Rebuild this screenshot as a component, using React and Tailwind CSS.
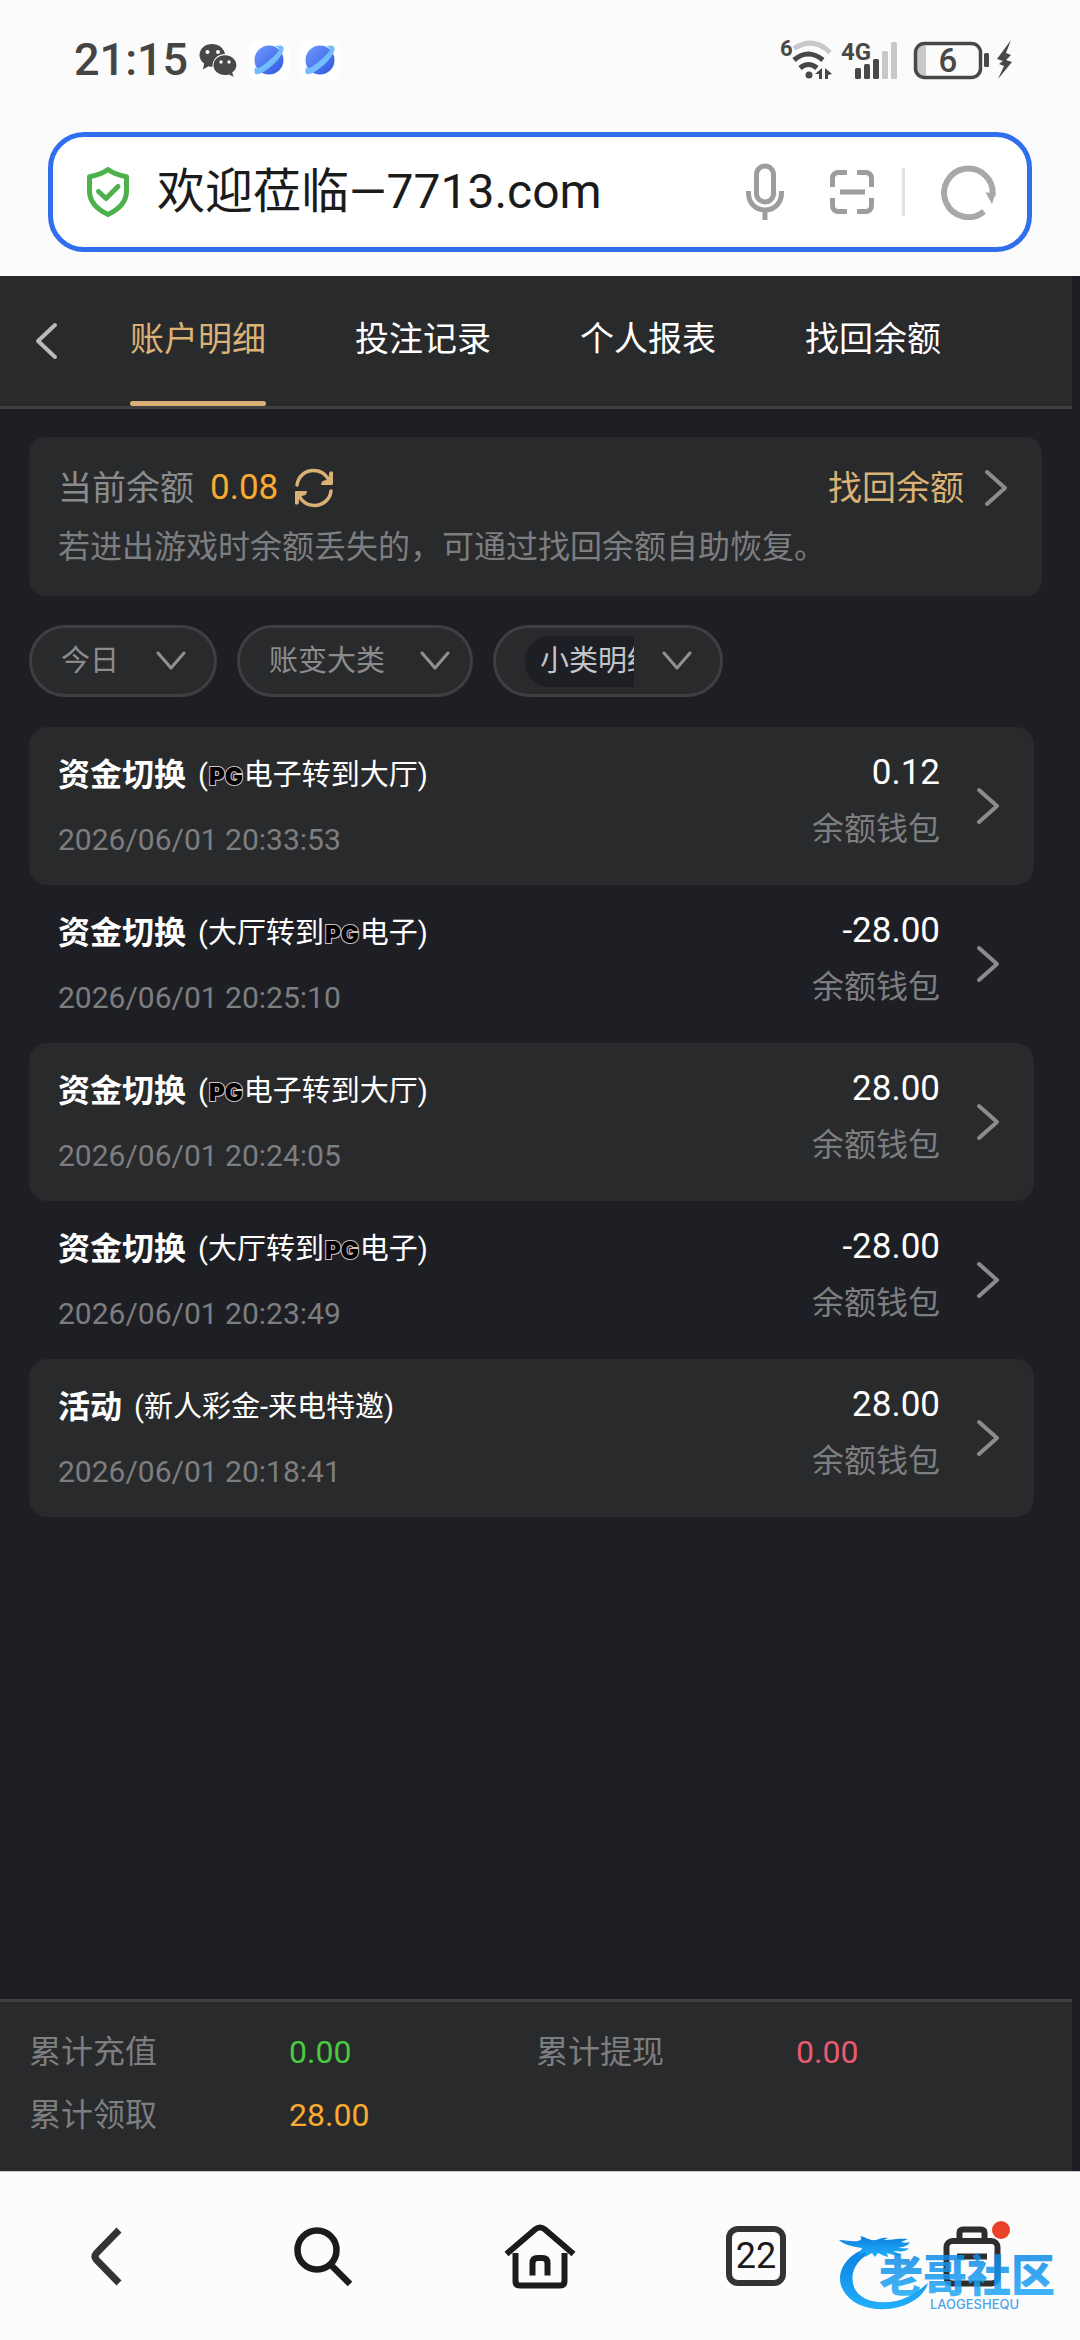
import { useState } from 'react'

const tabs = ['账户明细', '投注记录', '个人报表', '找回余额']

const records = [
    { title: '资金切换', before: '(', brand: true, after: '电子转到大厅)', time: '2026/06/01 20:33:53', amount: '0.12' },
    { title: '资金切换', before: '(大厅转到', brand: true, after: '电子)', time: '2026/06/01 20:25:10', amount: '-28.00' },
    { title: '资金切换', before: '(', brand: true, after: '电子转到大厅)', time: '2026/06/01 20:24:05', amount: '28.00' },
    { title: '资金切换', before: '(大厅转到', brand: true, after: '电子)', time: '2026/06/01 20:23:49', amount: '-28.00' },
    { title: '活动', before: '(新人彩金-来电特邀)', brand: false, after: '', time: '2026/06/01 20:18:41', amount: '28.00' },
]

const totals = [
    { label: '累计充值', value: '0.00', color: 'text-[#4bc940]' },
    { label: '累计提现', value: '0.00', color: 'text-[#ea5a73]' },
    { label: '累计领取', value: '28.00', color: 'text-[#f9ab30]' },
]

const ChevronRight = () => (
    <svg width="24" height="38" viewBox="0 0 24 38" fill="none" stroke="#8b8c8e" strokeWidth="4" strokeLinecap="round" strokeLinejoin="round">
        <path d="M3 3 21 19 3 35" />
    </svg>
)

const ChevronDown = () => (
    <svg className="pointer-events-none shrink-0" width="30" height="20" viewBox="0 0 30 20" fill="none" stroke="#909193" strokeWidth="3" strokeLinecap="round" strokeLinejoin="round">
        <path d="M2 2 15 17 28 2" />
    </svg>
)

const Planet = ({ id }) => (
    <span className="flex size-10 items-center justify-center rounded-lg bg-white">
        <svg width="32" height="32" viewBox="0 0 32 32">
            <defs>
                <linearGradient id={id} x1="0" y1="0" x2="1" y2="1">
                    <stop offset="0" stopColor="#6f9bff" />
                    <stop offset="1" stopColor="#2f57dd" />
                </linearGradient>
            </defs>
            <circle cx="16" cy="16" r="14.5" fill={`url(#${id})`} />
            <path d="M22 2.500C27 .5 31.500 1 30.500 6 29 12 22 20 14 25.500 8 30 2 32 1.500 28.500 1.300 26.500 1.500 25 2.200 23 3.500 26 8 23 13 19 19 14.500 25.500 8 26 5.500 26 4 24.500 2.800 22 2.500Z" fill="#74bdfd" />
        </svg>
    </span>
)

function StatusBar() {
    return (
        <div className="flex h-20 items-center justify-between pl-[74px] pr-[66px] text-[#454545]">
            <div className="flex items-center">
                <span className="text-[45px] leading-[48px] font-medium">21:15</span>
                <svg className="ml-[11px]" width="38" height="34" viewBox="0 0 38 34">
                    <path d="M13 1C6 1 .5 5.800.5 12c0 3.500 1.800 6.500 4.600 8.500L4 26.500l5.500-3.200c1.300.4 2.500.5 4 .5C13 17 18.500 11 26 11 25 5 19.500 1 13 1Z" fill="#484848" />
                    <path d="M26 12.300c-6.500 0-11.500 4.400-11.500 10S19.500 32 26 32c1.400 0 2.800-.2 4-.6l4.500 2.300-1.300-4.200c2.600-1.800 4.200-4.300 4.200-7.200 0-5.600-5-10-11.400-10Z" fill="#484848" />
                    <g fill="#fafafa">
                        <circle cx="8.500" cy="9" r="2" />
                        <circle cx="19" cy="9" r="2" />
                        <circle cx="22" cy="19" r="1.700" />
                        <circle cx="30" cy="19" r="1.700" />
                    </g>
                </svg>
                <div className="ml-3 flex gap-[11px]">
                    <Planet id="planet-a" />
                    <Planet id="planet-b" />
                </div>
            </div>
            <div className="flex items-center">
                <svg className="overflow-visible" width="54" height="42" viewBox="0 0 54 42" fill="none">
                    <text x="0" y="17" fontSize="22" fontWeight="700" fill="#484848">6</text>
                    <g strokeWidth="5">
                        <path d="M14 9.500Q34-3 50 13.500" stroke="#c8c8c8" />
                        <path d="M14 21Q28 9 43 21" stroke="#484848" />
                        <path d="M20 29Q28.500 22 37 29" stroke="#484848" />
                    </g>
                    <circle cx="29" cy="36" r="3.500" fill="#484848" />
                    <path d="M42 29v11h-3v-5h-4zM45 29l7 6-4 1v4h-3z" fill="#484848" />
                </svg>
                <svg className="ml-[6px] overflow-visible" width="60" height="42" viewBox="0 0 60 42">
                    <text x="1" y="21" fontSize="24" fontWeight="700" fill="#484848">4G</text>
                    <g fill="#484848">
                        <rect x="15" y="29" width="6" height="11" rx="1.500" />
                        <rect x="24" y="25" width="6" height="15" rx="1.500" />
                        <rect x="33" y="20" width="6" height="20" rx="1.500" />
                    </g>
                    <g fill="#c8c8c8">
                        <rect x="42" y="12" width="6" height="28" rx="1.500" />
                        <rect x="51" y="3" width="6" height="37" rx="1.500" />
                    </g>
                </svg>
                <svg className="ml-3" width="102" height="42" viewBox="0 0 102 42">
                    <rect x="5" y="6" width="9" height="32" rx="3" fill="#c8c8c8" />
                    <rect x="3.500" y="4.500" width="65" height="34" rx="9" fill="none" stroke="#484848" strokeWidth="3.500" />
                    <rect x="72" y="14" width="5" height="14" rx="1.500" fill="#484848" />
                    <text x="36" y="33" textAnchor="middle" fontSize="33" fontWeight="500" fill="#484848">6</text>
                    <path d="M99 1 85 20l6 2-4 3 5 2-6 13 14-17-6-2 5-5-5-2z" fill="#484848" />
                </svg>
            </div>
        </div>
    )
}

function AddressBar() {
    return (
        <div className="mx-12 mt-8 mb-6 flex h-[120px] items-center rounded-[36px] border-[5px] border-[#2f6fed] bg-white pl-[34px] pr-[31px]">
            <svg className="shrink-0" width="42" height="50" viewBox="0 0 42 50" fill="none" stroke="#4eb24c" strokeWidth="5" strokeLinecap="round" strokeLinejoin="round">
                <path d="M21 2.500C15 7 9 8.500 2.500 9.800V24c0 12 8 18.500 18.500 23.500C31.500 42.500 39.500 36 39.500 24V9.800C33 8.500 27 7 21 2.500Z" />
                <path d="M11.500 24.500 19 31.500 31 19.500" />
            </svg>
            <input
                aria-label="网址"
                defaultValue="欢迎莅临—7713.com"
                className="ml-7 min-w-0 flex-1 bg-transparent text-[48px] leading-[60px] text-[#1b1b1b] outline-none"
            />
            <button aria-label="语音">
                <svg width="38" height="58" viewBox="0 0 38 58" fill="none" stroke="#9d9d9d" strokeWidth="5">
                    <rect x="10.500" y="3" width="17" height="36" rx="8.500" />
                    <path d="M2.500 28v2c0 10 7 17 16.500 17s16.500-7 16.500-17v-2M19 47v10" />
                </svg>
            </button>
            <button aria-label="扫码" className="ml-[46px]">
                <svg width="44" height="44" viewBox="0 0 44 44" fill="none" stroke="#9d9d9d" strokeWidth="5">
                    <path d="M2.500 17V8a5.500 5.500 0 0 1 5.500-5.500h9M27 2.500h9A5.500 5.500 0 0 1 41.500 8v9M41.500 28v8a5.500 5.500 0 0 1-5.500 5.500h-9M17 41.500H8A5.500 5.500 0 0 1 2.500 36v-8M10 22h25" />
                </svg>
            </button>
            <span className="ml-7 h-12 w-[3px] bg-[#e3e3e3]" />
            <button aria-label="刷新" className="ml-9">
                <svg width="55" height="55" viewBox="0 0 55 55" fill="none">
                    <path d="M43 46.500A24.300 24.300 0 1 1 51.500 31" stroke="#a8a8a8" strokeWidth="6" />
                    <path d="M44.500 27.500 54.500 28 51 39z" fill="#a8a8a8" />
                </svg>
            </button>
        </div>
    )
}

function TabHeader() {
    const [active, setActive] = useState(0)

    return (
        <header className="mr-2 flex h-[133px] items-stretch border-b-[3px] border-[#3e3f41] bg-[#292a2c]">
            <button aria-label="返回" className="pl-[35px]">
                <svg width="23" height="38" viewBox="0 0 23 38" fill="none" stroke="#b9babc" strokeWidth="4" strokeLinecap="round" strokeLinejoin="round">
                    <path d="M20 3 3 19 20 35" />
                </svg>
            </button>
            <nav className="ml-[72px] flex gap-[89px]">
                {tabs.map((tab, i) => (
                    <button
                        key={tab}
                        onClick={() => setActive(i)}
                        className={`flex flex-col justify-between pt-[38px] text-[34px] leading-[50px] ${i === active ? 'text-[#dbb175]' : 'text-white'}`}
                    >
                        {tab}
                        <span className={`h-[5px] w-full rounded-full ${i === active ? 'bg-[#dbb175]' : 'bg-transparent'}`} />
                    </button>
                ))}
            </nav>
        </header>
    )
}

function BalanceCard() {
    return (
        <section className="mt-7 mr-[38px] ml-[29px] rounded-2xl bg-[#292a2c] pt-[29px] pr-[34px] pb-[26px] pl-[29px]">
            <div className="flex items-center text-[34px] leading-[44px]">
                <span className="text-[#8b8c8e]">当前余额</span>
                <span className="ml-4 text-[35px] text-[#f9ab30]">0.08</span>
                <button aria-label="刷新余额" className="ml-4">
                    <svg width="40" height="40" viewBox="0 0 40 40" fill="none">
                        <g stroke="#dbb175" strokeWidth="3.500" strokeLinecap="round" strokeLinejoin="round">
                            <path d="M3 17C4 8.500 11 2.500 19.500 2.500c6.500 0 12 3.500 15 9" />
                            <path d="M37 23c-1 8.500-8 14.500-16.500 14.500-6.500 0-12-3.500-15-9" />
                        </g>
                        <path d="M38.500 4v12.500H27.500l1-3 6-1.500 1.500-8zM1.500 36V23.500h11l-1 3-6 1.500L4 36z" fill="#dbb175" stroke="#dbb175" strokeLinejoin="round" />
                    </svg>
                </button>
                <a href="#recover" className="ml-auto flex items-center gap-5 text-[#dbb175]">
                    找回余额
                    <ChevronRight />
                </a>
            </div>
            <p className="mt-[14px] text-[32px] leading-[46px] text-[#7d7e80]">若进出游戏时余额丢失的，可通过找回余额自助恢复。</p>
        </section>
    )
}

function Filters() {
    return (
        <div className="mt-[29px] ml-[29px] flex gap-5 text-[29px] leading-[44px] text-[#8b8c8e]">
            <div className="flex h-[72px] items-center rounded-full border-[3px] border-[#3e3f41] bg-[#292a2c] pr-7 pl-[29px]">
                <select aria-label="日期" className="mr-9 appearance-none bg-transparent outline-none">
                    <option>今日</option>
                </select>
                <ChevronDown />
            </div>
            <div className="flex h-[72px] items-center rounded-full border-[3px] border-[#3e3f41] bg-[#292a2c] pr-5 pl-[29px]">
                <select aria-label="账变大类" className="mr-[34px] appearance-none bg-transparent outline-none">
                    <option>账变大类</option>
                </select>
                <ChevronDown />
            </div>
            <div className="flex h-[72px] items-center rounded-full border-[3px] border-[#3e3f41] bg-[#292a2c] pr-7 pl-[29px]">
                <select aria-label="小类明细" className="mr-7 h-[51px] w-[109px] appearance-none overflow-hidden rounded-l-3xl bg-[#1e1f24] pl-[15px] text-[#c4c5c7] outline-none">
                    <option>小类明细</option>
                </select>
                <ChevronDown />
            </div>
        </div>
    )
}

function RecordRow({ record, shaded }) {
    return (
        <li>
            <a href="#record" className={`flex items-center rounded-[18px] pt-[26px] pr-[34px] pb-[27px] pl-[29px] ${shaded ? 'bg-[#292a2c]' : ''}`}>
                <div>
                    <div className="flex items-center leading-[44px] text-white">
                        <span className="text-[32px] font-bold">{record.title}</span>
                        <span className="ml-3 text-[29px]">
                            {record.before}
                            {record.brand && (
                                <span className="mx-px font-[Inter] text-[24px] leading-none font-black text-black [-webkit-text-stroke:2px_#cfc3c3] [paint-order:stroke]">PG</span>
                            )}
                            {record.after}
                        </span>
                    </div>
                    <time className="mt-[25px] block text-[30px] leading-9 text-[#7d7e80]">{record.time}</time>
                </div>
                <div className="mr-9 ml-auto flex flex-col gap-4 self-start text-right leading-10">
                    <span className="text-[35px] text-white">{record.amount}</span>
                    <span className="text-[32px] text-[#7d7e80]">余额钱包</span>
                </div>
                <ChevronRight />
            </a>
        </li>
    )
}

function Totals() {
    return (
        <dl className="mr-2 grid h-[172px] grid-cols-2 content-start gap-y-[19px] border-t-[3px] border-[#3e3f41] bg-[#292a2c] px-[29px] pt-7 text-[32px] leading-[44px]">
            {totals.map((item) => (
                <div key={item.label} className="flex">
                    <dt className="w-[260px] text-[#7d7e80]">{item.label}</dt>
                    <dd className={item.color}>{item.value}</dd>
                </div>
            ))}
        </dl>
    )
}

// Site logo that floats over the bottom bar
function Watermark() {
    return (
        <svg className="pointer-events-none absolute right-4 bottom-[26px]" width="226" height="84" viewBox="0 0 226 84">
            <defs>
                <linearGradient id="wm" x1="0" y1="0" x2="0" y2="1">
                    <stop offset="0" stopColor="#0b7fe0" />
                    <stop offset="1" stopColor="#22b0fb" />
                </linearGradient>
            </defs>
            <g fill="url(#wm)">
                <path d="M34 17C8 22-4 44 5 60c9 17 34 23 56 17 15-4 26-13 29-24-11 9-19 15-32 18-19 4-37-1-42-14-5-14 2-28 20-36Z" />
                <path d="M1 10c8 0 12 2 19 1 4-1 4-3 2-5 6 1 10 5 16 4 4-1 7-3 12-2l-4 2c8 0 12-2 24-1l-7 3c4 1 6 1 9 0-3 5-8 5-12 6 4 0 8 1 11 0-4 5-10 3-15 3 1 2 6 2 7 4-7 1-10-1-14-2l1 4c-5-1-7-3-10-4l-3 4-3-4-7 4 1-5-7 3 3-7C16 17 6 15 1 10Z" />
                <text x="41" y="62" fontSize="44" fontWeight="900" fontFamily="'Noto Sans CJK SC', sans-serif" opacity="0.85">老哥社区</text>
            </g>
            <text x="92" y="79" fontSize="13" fontWeight="500" fill="#4aa5ea" fontFamily="Inter, sans-serif">LAOGESHEQU</text>
        </svg>
    )
}

function BottomBar() {
    return (
        <nav className="relative grid h-[169px] grid-cols-5 items-center justify-items-center border-t border-[#c9c9c9] bg-[#fcfcfc] text-[#1b1b1b]">
            <button aria-label="后退">
                <svg width="60" height="64" viewBox="0 0 60 64" fill="none" stroke="#333" strokeWidth="7">
                    <path d="M41 6 18.500 29q-3 3.500 0 7L41 59" />
                </svg>
            </button>
            <button aria-label="搜索">
                <svg width="64" height="64" viewBox="0 0 64 64" fill="none" stroke="#1b1b1b" strokeWidth="6.500">
                    <circle cx="25" cy="26" r="19.500" />
                    <path d="M39 41 58 60" />
                </svg>
            </button>
            <button aria-label="主页">
                <svg width="72" height="66" viewBox="0 0 72 66" fill="none" stroke="#1b1b1b" strokeWidth="6">
                    <path d="M2.500 31 31 6.500q5-4 10 0L69.500 31" />
                    <path d="M11.500 30v28q0 4.500 4.500 4.500h40q4.500 0 4.500-4.500V30M28.500 52.500V40q0-5 5-5h5q5 0 5 5v12.500" />
                </svg>
            </button>
            <button className="flex size-[60px] items-center justify-center rounded-xl border-[6px] border-[#333] text-[36px] leading-none">
                22
            </button>
            <button aria-label="工具箱" className="relative">
                <svg width="60" height="62" viewBox="0 0 60 62" fill="none" stroke="#2e2e2e" strokeWidth="6">
                    <rect x="4.500" y="16" width="51" height="42.500" rx="6" />
                    <path d="M17.500 15V8q0-3.500 3.500-3.500h18q3.500 0 3.500 3.500v7M15 31.500h30" />
                </svg>
                <span className="absolute -top-1 -right-2 size-[18px] rounded-full bg-[#e8432a]" />
            </button>
            <Watermark />
        </nav>
    )
}

export default function App() {
    return (
        <div className="flex min-h-screen flex-col bg-[#1e1f24] font-['Roboto','Noto_Sans_CJK_SC',sans-serif]">
            <div className="flex flex-col bg-[#fbfbfb] pt-5">
                <StatusBar />
                <AddressBar />
            </div>
            <TabHeader />
            <main className="flex-1">
                <BalanceCard />
                <Filters />
                <ul className="mt-[30px] mr-[46px] ml-[29px]">
                    {records.map((record, i) => (
                        <RecordRow key={record.time} record={record} shaded={i % 2 === 0} />
                    ))}
                </ul>
            </main>
            <Totals />
            <BottomBar />
        </div>
    )
}
